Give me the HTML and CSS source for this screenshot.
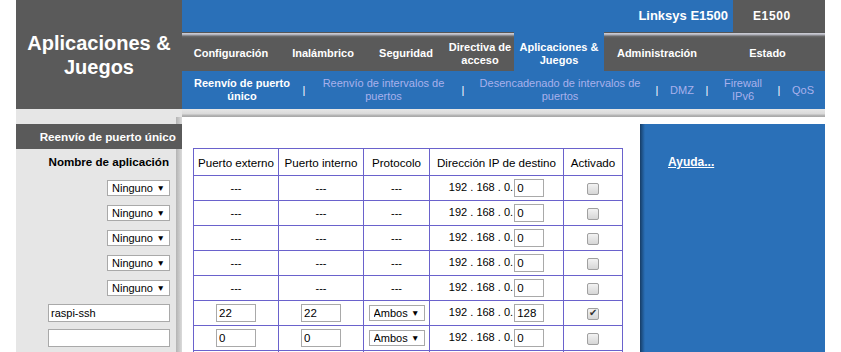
FILE: index.html
```html
<!DOCTYPE html>
<html lang="es">
<head>
    <meta charset="UTF-8">
    <meta name="viewport" content="width=device-width, initial-scale=1.0">
    <title>Linksys E1500 - Aplicaciones &amp; Juegos</title>
    <link rel="stylesheet" href="styles.css">
</head>
<body>
    <div class="page">
        <!-- Header -->
        <div class="top">
            <div class="brand">Aplicaciones &amp;<br>Juegos</div>
            <div class="bar">
                <div class="model">Linksys E1500</div>
                <div class="box">E1500</div>
            </div>
            <div class="menu">
                <div class="tab m1">Configuración</div>
                <div class="tab m2">Inalámbrico</div>
                <div class="tab m3">Seguridad</div>
                <div class="tab m4">Directiva de<br>acceso</div>
                <div class="tab m5 on">Aplicaciones &amp;<br>Juegos</div>
                <div class="tab m6">Administración</div>
                <div class="tab m7">Estado</div>
            </div>
            <div class="subnav">
                <div class="sub s1 on">Reenvío de puerto<br>único</div>
                <div class="sep">|</div>
                <div class="sub s2">Reenvío de intervalos de<br>puertos</div>
                <div class="sep">|</div>
                <div class="sub s3">Desencadenado de intervalos de<br>puertos</div>
                <div class="sep">|</div>
                <div class="sub s4">DMZ</div>
                <div class="sep">|</div>
                <div class="sub s5">Firewall<br>IPv6</div>
                <div class="sep">|</div>
                <div class="sub s6">QoS</div>
            </div>
        </div>

        <!-- Content -->
        <div class="content">
            <div class="side">
                <div class="side-title">Reenvío de puerto único</div>
                <div class="side-label">Nombre de aplicación</div>
                <div class="side-row"><span class="pick"><select class="app"><option>Ninguno</option></select></span></div>
                <div class="side-row"><span class="pick"><select class="app"><option>Ninguno</option></select></span></div>
                <div class="side-row"><span class="pick"><select class="app"><option>Ninguno</option></select></span></div>
                <div class="side-row"><span class="pick"><select class="app"><option>Ninguno</option></select></span></div>
                <div class="side-row"><span class="pick"><select class="app"><option>Ninguno</option></select></span></div>
                <div class="side-row"><input class="name" type="text" value="raspi-ssh"></div>
                <div class="side-row"><input class="name" type="text" value=""></div>
                <div class="side-row"><input class="name" type="text" value=""></div>
            </div>

            <div class="main">
                <div class="strip"></div>
                <div class="panels">
                    <div class="work">
                        <table class="ports">
                            <colgroup>
                                <col class="c1"><col class="c2"><col class="c3"><col class="c4"><col class="c5">
                            </colgroup>
                            <tr>
                                <th>Puerto externo</th>
                                <th>Puerto interno</th>
                                <th>Protocolo</th>
                                <th>Dirección IP de destino</th>
                                <th>Activado</th>
                            </tr>
                            <tr>
                                <td>---</td><td>---</td><td>---</td>
                                <td>192 . 168 . 0. <input class="oct" type="text" value="0"></td>
                                <td><input class="chk" type="checkbox"></td>
                            </tr>
                            <tr>
                                <td>---</td><td>---</td><td>---</td>
                                <td>192 . 168 . 0. <input class="oct" type="text" value="0"></td>
                                <td><input class="chk" type="checkbox"></td>
                            </tr>
                            <tr>
                                <td>---</td><td>---</td><td>---</td>
                                <td>192 . 168 . 0. <input class="oct" type="text" value="0"></td>
                                <td><input class="chk" type="checkbox"></td>
                            </tr>
                            <tr>
                                <td>---</td><td>---</td><td>---</td>
                                <td>192 . 168 . 0. <input class="oct" type="text" value="0"></td>
                                <td><input class="chk" type="checkbox"></td>
                            </tr>
                            <tr>
                                <td>---</td><td>---</td><td>---</td>
                                <td>192 . 168 . 0. <input class="oct" type="text" value="0"></td>
                                <td><input class="chk" type="checkbox"></td>
                            </tr>
                            <tr>
                                <td><input class="num" type="text" value="22"></td>
                                <td><input class="num" type="text" value="22"></td>
                                <td><span class="pick"><select class="proto"><option>Ambos</option></select></span></td>
                                <td>192 . 168 . 0. <input class="oct" type="text" value="128"></td>
                                <td><input class="chk" type="checkbox" checked></td>
                            </tr>
                            <tr>
                                <td><input class="num" type="text" value="0"></td>
                                <td><input class="num" type="text" value="0"></td>
                                <td><span class="pick"><select class="proto"><option>Ambos</option></select></span></td>
                                <td>192 . 168 . 0. <input class="oct" type="text" value="0"></td>
                                <td><input class="chk" type="checkbox"></td>
                            </tr>
                            <tr class="more">
                                <td></td><td></td><td></td><td></td><td></td>
                            </tr>
                        </table>
                    </div>
                    <div class="help">
                        <a href="#">Ayuda...</a>
                    </div>
                </div>
            </div>
        </div>
    </div>
</body>
</html>
```

FILE: styles.css
```css
body {
    margin: 0;
    background: #fff;
    font-family: "Liberation Sans", Arial, sans-serif;
    font-size: 11px;
    color: #000;
    overflow: hidden;
}

.page {
    width: 809px;
    margin: 0 auto;
}

/* Header */
.top {
    display: grid;
    grid-template-columns: 166px 643px;
}

.brand {
    grid-row: span 3;
    background: #5a5a5a;
    color: #fff;
    font-size: 20px;
    font-weight: bold;
    line-height: 24px;
    text-align: center;
    display: flex;
    align-items: center;
    justify-content: center;
}

.bar {
    display: flex;
    height: 32px;
}

.model {
    flex: 1;
    background: #2a70b8;
    color: #fff;
    font-size: 13px;
    font-weight: bold;
    line-height: 32px;
    text-align: right;
    padding-right: 5px;
}

.box {
    width: 72px;
    padding-left: 20px;
    background: #5a5a5a;
    color: #fff;
    font-size: 12px;
    font-weight: bold;
    letter-spacing: 0.6px;
    line-height: 32px;
}

.menu {
    display: flex;
    height: 39px;
    background: linear-gradient(#555 0, #555 1px, #d2d3db 1px, #a8a9b2 3px, #6c6c6c 4px, #5a5a5a 6px);
}

.tab {
    display: flex;
    align-items: center;
    justify-content: center;
    padding-top: 4px;
    box-sizing: border-box;
    color: #fff;
    font-weight: bold;
    line-height: 13px;
    text-align: center;
}

.tab.on {
    background: #2a70b8;
}

.m1 { width: 98px; }
.m2 { width: 86px; }
.m3 { width: 80px; }
.m4 { width: 68px; }
.m5 { width: 90px; }
.m6 { width: 106px; }
.m7 { width: 115px; }

.subnav {
    display: flex;
    align-items: center;
    height: 38px;
    background: #2a70b8;
}

.sub {
    text-align: center;
    line-height: 13px;
    color: #a9b0ec;
}

.sub.on {
    color: #fff;
    font-weight: bold;
}

.sep {
    width: 4px;
    text-align: center;
    color: #fff;
}

.s1 { width: 120px; }
.s2 { width: 155px; }
.s3 { width: 190px; }
.s4 { width: 46px; }
.s5 { width: 68px; }
.s6 { width: 44px; }

/* Content */
.content {
    display: grid;
    grid-template-columns: 166px 643px;
}

.side {
    padding-top: 15px;
    background: linear-gradient(to right, #b4b4b4, #dadada) right 0 top 8px / 6px 100% no-repeat, #e6e6e6;
}

.side-title {
    height: 25px;
    line-height: 25px;
    background: #5a5a5a;
    color: #fff;
    font-size: 11.7px;
    font-weight: bold;
    text-align: right;
    padding-right: 6px;
}

.side-label {
    height: 26px;
    line-height: 26px;
    font-size: 11.6px;
    font-weight: bold;
    text-align: right;
    padding-right: 13px;
}

.side-row {
    height: 25px;
    display: flex;
    align-items: center;
    justify-content: flex-end;
    padding-right: 12px;
}

.pick {
    position: relative;
    display: inline-block;
}

.pick::after {
    content: "\25BC";
    position: absolute;
    right: 5px;
    top: 3px;
    font-size: 8.5px;
    color: #000;
    pointer-events: none;
}

.pick select {
    appearance: none;
    -webkit-appearance: none;
    display: block;
    height: 16px;
    box-sizing: border-box;
    border: 1px solid #a9a9a9;
    border-radius: 0;
    background: #fff;
    color: #000;
    font: 11px "Liberation Sans", Arial, sans-serif;
    padding: 0 0 0 4px;
}

.app { width: 63px; }
.proto { width: 56px; }

.name {
    width: 122px;
    height: 18px;
    box-sizing: border-box;
    border: 1px solid #a9a9a9;
    padding: 0 2px;
    font: 11px "Liberation Sans", Arial, sans-serif;
}

.main {
    display: flex;
    flex-direction: column;
}

.strip {
    height: 8px;
    background: linear-gradient(#e6e6e6 0, #dadada 5px, #b8b8b8 6px, #a6a6a6 8px);
}

.panels {
    flex: 1;
    display: flex;
}

.work {
    flex: 1;
    padding: 31px 0 0 11px;
}

.ports {
    border-collapse: collapse;
    table-layout: fixed;
    width: 430px;
}

.ports th,
.ports td {
    border: 1px solid #6a62cc;
    padding: 0;
    text-align: center;
    white-space: nowrap;
}

.ports th {
    height: 26px;
    font-size: 11.6px;
    font-weight: normal;
}

.ports td {
    height: 24px;
}

.c1 { width: 85px; }
.c2 { width: 85px; }
.c3 { width: 66px; }
.c4 { width: 134px; }
.c5 { width: 59px; }

.num,
.oct {
    height: 18px;
    box-sizing: border-box;
    border: 1px solid #a9a9a9;
    padding: 0 2px;
    font: 11.5px "Liberation Sans", Arial, sans-serif;
    vertical-align: middle;
}

.num { width: 40px; }
.oct { width: 30px; margin-left: -2px; }

.chk {
    appearance: none;
    -webkit-appearance: none;
    width: 12px;
    height: 12px;
    margin: 0;
    border: 1px solid #a0a0a0;
    border-radius: 2px;
    background: linear-gradient(#f2f2f2, #d6d6d6);
    vertical-align: middle;
    position: relative;
}

.chk:checked::after {
    content: "\2714";
    position: absolute;
    left: 1px;
    top: -2px;
    font-size: 10px;
    color: #333;
}

.help {
    width: 185px;
    margin-top: 7px;
    box-sizing: border-box;
    padding: 31px 0 0 28px;
    background: linear-gradient(to right, #163d66, #2a70b8 5px);
}

.help a {
    color: #fff;
    font-size: 12px;
    font-weight: bold;
    text-decoration: underline;
}
```
